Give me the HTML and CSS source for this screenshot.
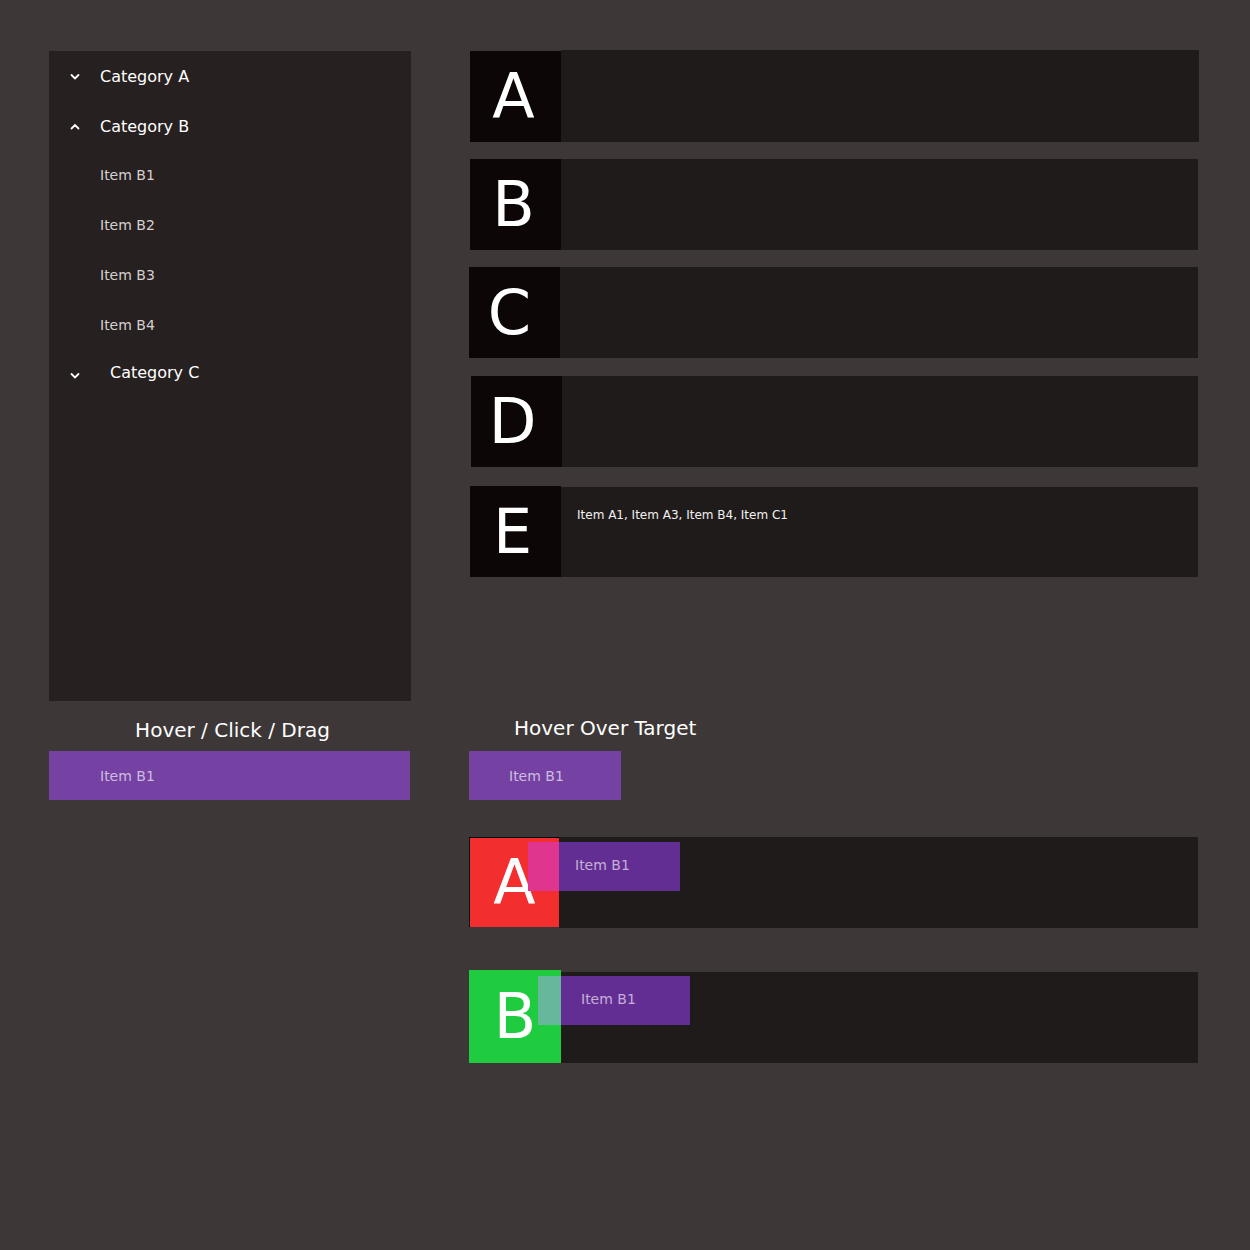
FILE: index.html
```html
<!DOCTYPE html>
<html>
<head>
<meta charset="utf-8">
<link rel="stylesheet" href="styles.css">
</head>
<body>
<div class="page">
  <div class="left">
    <div class="sidebar">
      <div class="row cat"><svg class="chev" width="10" height="8" viewBox="0 0 10 8"><polyline points="1.5,2 5,5.5 8.5,2" /></svg><span>Category A</span></div>
      <div class="row cat"><svg class="chev" width="10" height="8" viewBox="0 0 10 8"><polyline points="1.5,5.5 5,2 8.5,5.5" /></svg><span>Category B</span></div>
      <div class="row item"><span>Item B1</span></div>
      <div class="row item"><span>Item B2</span></div>
      <div class="row item"><span>Item B3</span></div>
      <div class="row item"><span>Item B4</span></div>
      <div class="row cat catc"><svg class="chev" width="10" height="8" viewBox="0 0 10 8"><polyline points="1.5,2 5,5.5 8.5,2" /></svg><span>Category C</span></div>
    </div>
    <div class="heading center">Hover / Click / Drag</div>
    <div class="drag wide"><span>Item B1</span></div>
  </div>
  <div class="right">
    <div class="card c1"><div class="letter">A</div><div class="bar"></div></div>
    <div class="card c2"><div class="letter">B</div><div class="bar"></div></div>
    <div class="card c3"><div class="letter">C</div><div class="bar"></div></div>
    <div class="card c4"><div class="letter">D</div><div class="bar"></div></div>
    <div class="card c5"><div class="letter">E</div><div class="bar"><span class="list">Item A1, Item A3, Item B4, Item C1</span></div></div>
    <div class="heading target">Hover Over Target</div>
    <div class="drag narrow"><span>Item B1</span></div>
    <div class="card hv red"><div class="letter">A</div><div class="bar"></div><div class="ghost gred"><span>Item B1</span></div></div>
    <div class="card hv green"><div class="letter">B</div><div class="bar"></div><div class="ghost ggreen"><span>Item B1</span></div></div>
  </div>
</div>
</body>
</html>
```
FILE: styles.css
```css
html, body {
  margin: 0;
  padding: 0;
  background: #3d3837;
  font-family: "DejaVu Sans", Verdana, sans-serif;
  color: #ffffff;
}
.page {
  display: flex;
  padding: 51px 0 0 49px;
  height: 1250px;
  box-sizing: border-box;
}
.left {
  width: 362px;
  display: flex;
  flex-direction: column;
}
.sidebar {
  height: 650px;
  background: #262020;
  display: flex;
  flex-direction: column;
}
.row {
  height: 50px;
  display: flex;
  align-items: center;
  padding-left: 51px;
  position: relative;
}
.cat {
  font-size: 16px;
  color: #ffffff;
}
.catc {
  height: 42px;
  padding-left: 61px;
}
.item {
  font-size: 14px;
  color: #d6d0d0;
}
.row.item span {
  margin-top: -2px;
}
.chev {
  position: absolute;
  left: 21px;
  top: 50%;
  margin-top: -3px;
}
.catc .chev {
  margin-top: 0;
}
.chev polyline {
  fill: none;
  stroke: #ffffff;
  stroke-width: 1.8;
  stroke-linecap: round;
  stroke-linejoin: miter;
}
.heading {
  font-size: 20px;
  color: #ffffff;
  height: 24px;
  line-height: 24px;
}
.center {
  text-align: center;
  margin-top: 17px;
  margin-bottom: 9px;
  padding-left: 5px;
}
.drag {
  height: 49px;
  background: #7542a3;
  display: flex;
  align-items: center;
  font-size: 14px;
  color: #cdbbe0;
}
.drag.wide {
  width: 361px;
  padding-left: 51px;
  box-sizing: border-box;
}
.right {
  margin-left: 58px;
  width: 730px;
  display: flex;
  flex-direction: column;
}
.card {
  display: flex;
  height: 91px;
  position: relative;
}
.letter {
  width: 91px;
  height: 91px;
  background: #0c0706;
  font-size: 62px;
  display: flex;
  align-items: center;
  justify-content: center;
  color: #ffffff;
  line-height: 1;
  flex: none;
  box-sizing: border-box;
  padding-right: 4px;
}
.bar {
  flex: 1;
  background: #201b1b;
}
.c1 { margin-left: 1px; }
.c1 .bar { margin-top: -1px; }
.c2 { margin-top: 17px; margin-left: 1px; width: 728px; }
.c3 { margin-top: 17px; width: 729px; }
.c3 .letter { padding-right: 10px; }
.c4 { margin-top: 18px; margin-left: 2px; width: 727px; }
.c4 .letter { padding-right: 8px; }
.c5 { margin-top: 19px; margin-left: 1px; width: 728px; }
.c5 .letter { padding-right: 6px; }
.c5 .bar { margin-top: 1px; }
.list {
  display: block;
  font-size: 12px;
  color: #f2f0f0;
  padding: 21px 0 0 16px;
}
.target {
  margin-top: 139px;
  margin-bottom: 11px;
  padding-left: 45px;
}
.drag.narrow {
  width: 152px;
  padding-left: 40px;
  box-sizing: border-box;
}
.hv {
  width: 729px;
}
.red {
  margin-top: 37px;
}
.red .letter {
  width: 90px;
  height: 90px;
  background: #f22e2e;
  border-left: 1px solid #000;
  border-top: 1px solid #000;
  padding-right: 0;
}
.red .bar {
  height: 91px;
}
.green {
  margin-top: 42px;
  height: 93px;
}
.green .letter {
  width: 92px;
  height: 93px;
  background: #1fcc40;
  padding-right: 0;
}
.green .bar {
  margin-top: 2px;
}
.ghost {
  position: absolute;
  width: 152px;
  height: 49px;
  display: flex;
  align-items: center;
  font-size: 14px;
  color: #c4b0d6;
  box-sizing: border-box;
}
.ghost span {
  margin-top: -4px;
}
.gred {
  left: 59px;
  top: 5px;
  padding-left: 47px;
  background: linear-gradient(to right, #e0358e 0, #e0358e 31px, #632e94 31px);
}
.ggreen {
  left: 69px;
  top: 6px;
  padding-left: 43px;
  background: linear-gradient(to right, #66b79b 0, #66b79b 23px, #632e94 23px);
}
```
